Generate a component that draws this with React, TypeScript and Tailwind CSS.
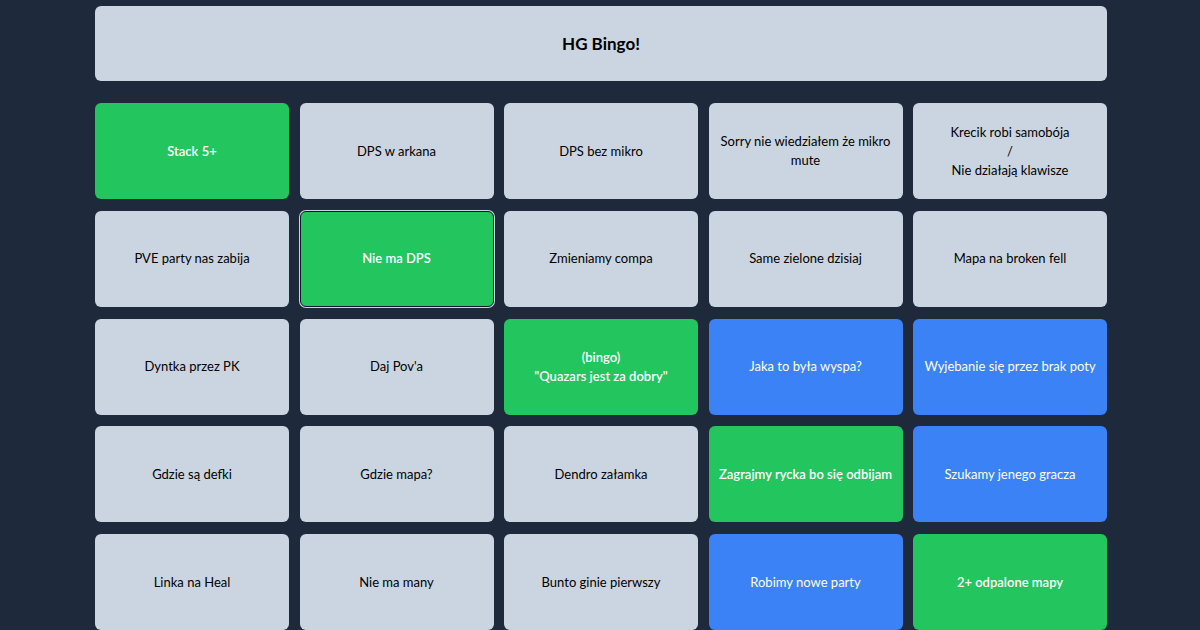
const cells: { text: string; tone: "gray" | "green" | "blue"; focused?: boolean }[] = [
  { text: "Stack 5+", tone: "green" },
  { text: "DPS w arkana", tone: "gray" },
  { text: "DPS bez mikro", tone: "gray" },
  { text: "Sorry nie wiedziałem że mikro mute", tone: "gray" },
  { text: "Krecik robi samobója\n/\nNie działają klawisze", tone: "gray" },
  { text: "PVE party nas zabija", tone: "gray" },
  { text: "Nie ma DPS", tone: "green", focused: true },
  { text: "Zmieniamy compa", tone: "gray" },
  { text: "Same zielone dzisiaj", tone: "gray" },
  { text: "Mapa na broken fell", tone: "gray" },
  { text: "Dyntka przez PK", tone: "gray" },
  { text: "Daj Pov'a", tone: "gray" },
  { text: "(bingo)\n\"Quazars jest za dobry\"", tone: "green" },
  { text: "Jaka to była wyspa?", tone: "blue" },
  { text: "Wyjebanie się przez brak poty", tone: "blue" },
  { text: "Gdzie są defki", tone: "gray" },
  { text: "Gdzie mapa?", tone: "gray" },
  { text: "Dendro załamka", tone: "gray" },
  { text: "Zagrajmy rycka bo się odbijam", tone: "green" },
  { text: "Szukamy jenego gracza", tone: "blue" },
  { text: "Linka na Heal", tone: "gray" },
  { text: "Nie ma many", tone: "gray" },
  { text: "Bunto ginie pierwszy", tone: "gray" },
  { text: "Robimy nowe party", tone: "blue" },
  { text: "2+ odpalone mapy", tone: "green" },
];

const toneClass = {
  gray: "bg-[#cbd5e1] text-black",
  green: "bg-[#22c55e] text-white font-semibold",
  blue: "bg-[#3b82f6] text-white",
};

export default function App() {
  return (
    <div className="min-h-screen bg-[#1e293b] font-['Lato',sans-serif]">
      <div className="ml-[95px] w-[1012px] pt-[6px]">
        <div className="flex h-[75px] items-center justify-center rounded-md bg-[#cbd5e1] text-[17px] font-bold text-black">
          HG Bingo!
        </div>

        <div className="mt-[22px] grid grid-cols-5 gap-x-[10.5px] gap-y-[11.75px]">
          {cells.map((c, i) => (
            <div
              key={i}
              className={`flex h-[96px] items-center justify-center whitespace-pre-line rounded-md px-2 text-center text-[13px] leading-[19px] ${toneClass[c.tone]} ${
                c.focused ? "border border-[#0f172a] ring-1 ring-[#cbd5e1]" : ""
              }`}
            >
              {c.text}
            </div>
          ))}
        </div>
      </div>
    </div>
  );
}
